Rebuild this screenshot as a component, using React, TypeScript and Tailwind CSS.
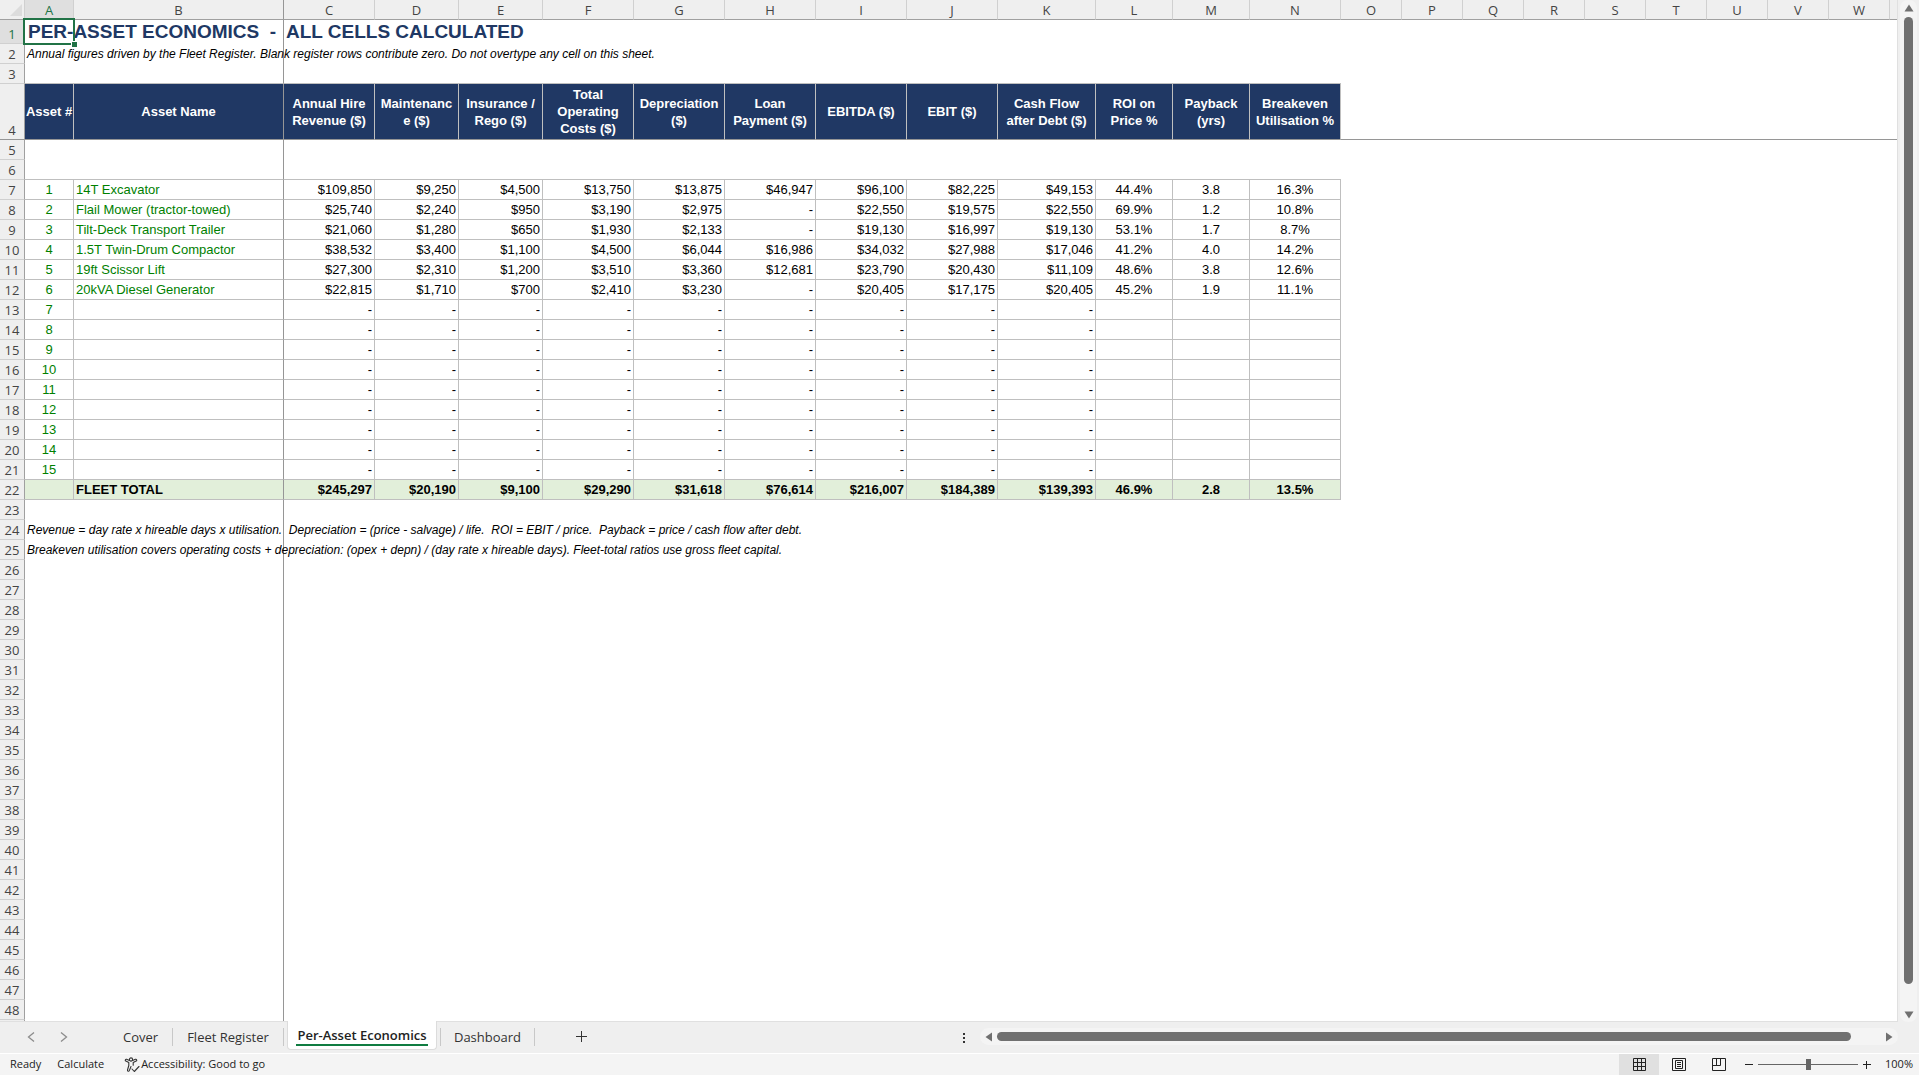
import React from "react";

const cols = [
  { name: "A", w: "w-[49px]" },
  { name: "B", w: "w-[210px]" },
  { name: "C", w: "w-[91px]" },
  { name: "D", w: "w-[84px]" },
  { name: "E", w: "w-[84px]" },
  { name: "F", w: "w-[91px]" },
  { name: "G", w: "w-[91px]" },
  { name: "H", w: "w-[91px]" },
  { name: "I", w: "w-[91px]" },
  { name: "J", w: "w-[91px]" },
  { name: "K", w: "w-[98px]" },
  { name: "L", w: "w-[77px]" },
  { name: "M", w: "w-[77px]" },
  { name: "N", w: "w-[91px]" },
  ..."OPQRSTUVW".split("").map((name) => ({ name, w: "w-[61px]" })),
];

const headings = [
  "Asset #",
  "Asset Name",
  "Annual Hire\nRevenue ($)",
  "Maintenanc\ne ($)",
  "Insurance /\nRego ($)",
  "Total\nOperating\nCosts ($)",
  "Depreciation\n($)",
  "Loan\nPayment ($)",
  "EBITDA ($)",
  "EBIT ($)",
  "Cash Flow\nafter Debt ($)",
  "ROI on\nPrice %",
  "Payback\n(yrs)",
  "Breakeven\nUtilisation %",
];

const assets = [
  ["1", "14T Excavator", "$109,850", "$9,250", "$4,500", "$13,750", "$13,875", "$46,947", "$96,100", "$82,225", "$49,153", "44.4%", "3.8", "16.3%"],
  ["2", "Flail Mower (tractor-towed)", "$25,740", "$2,240", "$950", "$3,190", "$2,975", "-", "$22,550", "$19,575", "$22,550", "69.9%", "1.2", "10.8%"],
  ["3", "Tilt-Deck Transport Trailer", "$21,060", "$1,280", "$650", "$1,930", "$2,133", "-", "$19,130", "$16,997", "$19,130", "53.1%", "1.7", "8.7%"],
  ["4", "1.5T Twin-Drum Compactor", "$38,532", "$3,400", "$1,100", "$4,500", "$6,044", "$16,986", "$34,032", "$27,988", "$17,046", "41.2%", "4.0", "14.2%"],
  ["5", "19ft Scissor Lift", "$27,300", "$2,310", "$1,200", "$3,510", "$3,360", "$12,681", "$23,790", "$20,430", "$11,109", "48.6%", "3.8", "12.6%"],
  ["6", "20kVA Diesel Generator", "$22,815", "$1,710", "$700", "$2,410", "$3,230", "-", "$20,405", "$17,175", "$20,405", "45.2%", "1.9", "11.1%"],
  ...["7", "8", "9", "10", "11", "12", "13", "14", "15"].map((n) => [n, "", "-", "-", "-", "-", "-", "-", "-", "-", "-", "", "", ""]),
];

const totals = ["", "FLEET TOTAL", "$245,297", "$20,190", "$9,100", "$29,290", "$31,618", "$76,614", "$216,007", "$184,389", "$139,393", "46.9%", "2.8", "13.5%"];

const notes: Record<number, string> = {
  2: "Annual figures driven by the Fleet Register. Blank register rows contribute zero. Do not overtype any cell on this sheet.",
  24: "Revenue = day rate x hireable days x utilisation.  Depreciation = (price - salvage) / life.  ROI = EBIT / price.  Payback = price / cash flow after debt.",
  25: "Breakeven utilisation covers operating costs + depreciation: (opex + depn) / (day rate x hireable days). Fleet-total ratios use gross fleet capital.",
};

const align = (c: number) =>
  c === 0 || c > 10 ? "text-center" : c === 1 ? "text-left pl-0.5" : "text-right pr-0.5";

function RowHead({ n }: { n: number }) {
  const active = n === 1;
  return (
    <th
      scope="row"
      className={`border-r border-r-[#a0a0a0] p-0 align-bottom font-normal ${
        active ? "bg-[#dfdfdf] text-[#217346]" : "bg-[#efefef] text-[#444]"
      } ${n === 4 ? "border-b border-b-[#969696]" : "border-b border-b-[#d0d0d0]"}`}
    >
      <span className="block text-center font-['Open_Sans',sans-serif] text-[13px] leading-[18px]">{n}</span>
    </th>
  );
}

/* Empty cells of a row; column B carries the frozen-pane line on its right edge. */
function Blanks({ from, line }: { from: number; line?: string }) {
  return (
    <>
      {cols.slice(from).map((c, i) => (
        <td key={c.name} className={`p-0 ${from + i === 1 ? "border-r border-r-[#969696]" : ""} ${line ?? ""}`} />
      ))}
      <td className={`p-0 ${line ?? ""}`} />
    </>
  );
}

function SheetRow({ n }: { n: number }) {
  if (n === 1)
    return (
      <tr className="h-6">
        <RowHead n={1} />
        <td className="relative p-0">
          <span className="block pl-[3px] text-[19px] leading-6 font-bold whitespace-pre text-[#203864]">
            {"PER-ASSET ECONOMICS  -  ALL CELLS CALCULATED"}
          </span>
          <span className="absolute -inset-x-px -top-0.5 -bottom-px -ml-px border-2 border-[#217346]" />
          <span className="absolute -right-[3px] -bottom-[3px] size-1.5 border-t border-l border-white bg-[#217346]" />
        </td>
        <Blanks from={1} />
      </tr>
    );
  if (notes[n])
    return (
      <tr className="h-5">
        <RowHead n={n} />
        <td className="p-0">
          <span className="block pl-0.5 text-[12px] leading-5 whitespace-pre text-black italic">{notes[n]}</span>
        </td>
        <Blanks from={1} />
      </tr>
    );
  if (n === 4)
    return (
      <tr className="h-14">
        <RowHead n={4} />
        {headings.map((h, i) => (
          <th
            key={h}
            scope="col"
            className={`border-r border-b border-b-[#969696] bg-[#203864] p-0 text-[13px] leading-[17px] font-bold whitespace-pre text-white ${
              i === 1 ? "border-r-[#969696]" : "border-r-[#bfbfbf]"
            }`}
          >
            {h}
          </th>
        ))}
        <Blanks from={14} line="border-b border-b-[#969696]" />
      </tr>
    );
  if (n >= 7 && n <= 22) {
    const total = n === 22;
    const cells = total ? totals : assets[n - 7];
    return (
      <tr className="h-5">
        <RowHead n={n} />
        {cells.map((v, i) => (
          <td
            key={i}
            className={`border-r border-b border-b-[#bfbfbf] p-0 text-[13px] leading-[19px] whitespace-nowrap ${align(i)} ${
              i === 1 ? "border-r-[#969696]" : "border-r-[#bfbfbf]"
            } ${total ? "bg-[#e2efda] font-bold text-black" : i < 2 ? "text-[#008000]" : "text-black"}`}
          >
            {v}
          </td>
        ))}
        <Blanks from={14} />
      </tr>
    );
  }
  if (n === 3 || n === 6)
    return (
      <tr className="h-5">
        <RowHead n={n} />
        {headings.map((h, i) => (
          <td key={h} className={`border-b border-b-[#bfbfbf] p-0 ${i === 1 ? "border-r border-r-[#969696]" : ""}`} />
        ))}
        <Blanks from={14} />
      </tr>
    );
  return (
    <tr className="h-5">
      <RowHead n={n} />
      <Blanks from={0} />
    </tr>
  );
}

function Sheet() {
  return (
    <div className="min-w-0 flex-1 overflow-hidden border-r border-b border-[#e0e0e0] bg-white">
      <table className="w-full table-fixed border-separate border-spacing-0 font-['Liberation_Sans',Arial,sans-serif]">
        <colgroup>
          <col className="w-[25px]" />
          {cols.map((c) => (
            <col key={c.name} className={c.w} />
          ))}
          <col />
        </colgroup>
        <thead>
          <tr className="h-5 bg-[#efefef]">
            <th className="border-r border-b border-[#a0a0a0] border-r-[#d0d0d0] p-0">
              <svg className="ml-2.5 block size-3" viewBox="0 0 12 12" aria-label="Select all">
                <path d="M12 0v12H0z" fill="#dcdcdc" />
              </svg>
            </th>
            {cols.map((c, i) => (
              <th
                key={c.name}
                scope="col"
                className={`border-r border-b border-b-[#a0a0a0] px-0 pt-0.5 pb-0 font-['Open_Sans',sans-serif] text-[13px] leading-[17px] font-normal ${
                  i === 0 ? "bg-[#dfdfdf] text-[#217346]" : "text-[#444]"
                } ${i === 1 ? "border-r-[#969696]" : "border-r-[#d0d0d0]"}`}
              >
                {c.name}
              </th>
            ))}
            <th className="border-b border-b-[#a0a0a0] p-0" />
          </tr>
        </thead>
        <tbody>
          {Array.from({ length: 48 }, (_, i) => (
            <SheetRow key={i} n={i + 1} />
          ))}
          <tr className="h-5">
            <td className="border-r border-r-[#a0a0a0] bg-[#efefef] p-0" />
            <Blanks from={0} />
          </tr>
        </tbody>
      </table>
    </div>
  );
}

function VerticalScroll() {
  return (
    <div className="flex w-[21px] shrink-0 bg-[#efefef] pl-0.5">
      <div className="flex w-[17px] flex-col items-center rounded-lg bg-[#f4f4f4] pt-1 pb-[3px]">
        <button aria-label="Scroll up">
          <svg className="block h-2 w-2.5" viewBox="0 0 10 8">
            <path d="M5 .5 9.5 7.500H.5z" fill="#707070" />
          </svg>
        </button>
        <div className="mt-[5px] mb-[27px] w-[9px] flex-1 rounded-full bg-[#707070]" />
        <button aria-label="Scroll down">
          <svg className="block h-2 w-2.5" viewBox="0 0 10 8">
            <path d="M.5.500h9L5 7.500z" fill="#707070" />
          </svg>
        </button>
      </div>
    </div>
  );
}

function TabBar() {
  return (
    <div className="flex h-[31px] shrink-0 items-start bg-[#efefef] font-['Open_Sans',sans-serif] text-[13px] text-[#333]">
      <div className="flex h-[30px] w-[109px] items-center gap-[25px] pl-[27px] text-[#8c8c8c]">
        <button aria-label="Previous sheet">
          <svg className="block h-2.5 w-2" viewBox="0 0 8 10" fill="none" stroke="currentColor" strokeWidth="1.3">
            <path d="M7 .5 1.500 5 7 9.500" />
          </svg>
        </button>
        <button aria-label="Next sheet">
          <svg className="block h-2.5 w-2" viewBox="0 0 8 10" fill="none" stroke="currentColor" strokeWidth="1.3">
            <path d="M1 .5 6.500 5 1 9.500" />
          </svg>
        </button>
      </div>
      <div className="mt-1.5 flex">
        <button className="h-[18px] w-16 border-r border-[#c8c8c8] leading-[18px]">Cover</button>
        <button className="h-[18px] w-[111px] border-r border-[#c8c8c8] leading-[18px]">Fleet Register</button>
      </div>
      <button className="-mt-px ml-[3px] flex h-[29px] w-[150px] justify-center rounded-b-[4px] border border-t-0 border-[#dcdcdc] bg-white text-[#222]">
        <span className="mt-1 h-[21px] w-[132px] border-b-2 border-[#107c41] leading-5 font-semibold whitespace-nowrap">Per-Asset Economics</span>
      </button>
      <button className="mt-1.5 ml-[3px] h-[18px] w-[95px] border-r border-l border-[#c8c8c8] leading-[18px]">Dashboard</button>
      <button className="mt-[9px] ml-[41px]" aria-label="New sheet">
        <svg className="block size-[11px]" viewBox="0 0 11 11" stroke="#333" fill="none">
          <path d="M5.500 0v11M0 5.500h11" />
        </svg>
      </button>
      <div className="flex-1" />
      <div className="mt-[11px] mr-[15px] flex w-0.5 flex-col gap-0.5">
        <i className="size-0.5 bg-[#333]" />
        <i className="size-0.5 bg-[#333]" />
        <i className="size-0.5 bg-[#333]" />
      </div>
      <div className="mt-1.5 mr-[21px] flex h-[17px] w-[918px] items-center rounded-full bg-[#f4f4f4] px-[5px]">
        <button aria-label="Scroll left">
          <svg className="block h-2.5 w-2" viewBox="0 0 8 10">
            <path d="M.5 5 7 .5v9z" fill="#707070" />
          </svg>
        </button>
        <div className="mr-[34px] ml-1 h-[9px] flex-1 rounded-full bg-[#707070]" />
        <button aria-label="Scroll right">
          <svg className="block h-2.5 w-2" viewBox="0 0 8 10">
            <path d="M7.500 5 1 .5v9z" fill="#707070" />
          </svg>
        </button>
      </div>
    </div>
  );
}

function StatusBar() {
  return (
    <div className="flex h-[22px] shrink-0 items-center border-t border-white bg-[#f4f4f4] font-['Open_Sans',sans-serif] text-[11px] text-[#222]">
      <span className="ml-2.5">Ready</span>
      <span className="ml-4">Calculate</span>
      <button className="ml-5 flex items-center">
        <svg className="mr-px block size-4" viewBox="0 0 16 16" fill="none" stroke="#333" strokeWidth="1.1" strokeLinecap="round" strokeLinejoin="round">
          <circle cx="7" cy="2.500" r="1.600" />
          <path d="M5.400 3.400 2.600 2.300c-1.200-.4-1.900 1.300-.8 1.800L4.800 5.500v3L3.500 13c-.3 1.200 1.300 1.800 1.800.6L7 9.500M8.600 3.400l2.800-1.100c1.200-.4 1.900 1.300.8 1.800L9.200 5.500v2.700M8 12l2.300 2.500 4.700-5" />
        </svg>
        Accessibility: Good to go
      </button>
      <div className="flex-1" />
      <button className="flex h-full w-10 items-center justify-center bg-[#e0e0e0]" aria-label="Normal view">
        <svg className="block size-[13px]" viewBox="0 0 13 13" fill="none" stroke="#222">
          <path d="M.5.500h12v12H.5zM4.500.500v12M8.500.500v12M.5 4.500h12M.5 8.500h12" />
        </svg>
      </button>
      <button className="flex w-10 justify-center" aria-label="Page layout">
        <svg className="block h-[13px] w-3.5" viewBox="0 0 14 13" fill="none" stroke="#222">
          <path d="M.5.500h13v12H.5zM3.500 2.500h7v8h-7zM5 4.500h4M5 6.500h4M5 8.500h4" />
        </svg>
      </button>
      <button className="flex w-10 justify-center" aria-label="Page break preview">
        <svg className="block h-[13px] w-3.5" viewBox="0 0 14 13" fill="none" stroke="#222">
          <path d="M.5.500h13v12H.5zM.5 7.500h8v-7M4.500.500v7" />
        </svg>
      </button>
      <button className="ml-[6px]" aria-label="Zoom out">
        <svg className="block size-2" viewBox="0 0 8 8" stroke="#222">
          <path d="M0 3.500h8" />
        </svg>
      </button>
      <label className="ml-[5px] flex">
        <input
          type="range"
          aria-label="Zoom"
          defaultValue={50}
          className="h-3 w-[100px] appearance-none bg-[linear-gradient(#666,#666)] bg-size-[100%_1px] bg-center bg-no-repeat [&::-webkit-slider-thumb]:h-[11px] [&::-webkit-slider-thumb]:w-[5px] [&::-webkit-slider-thumb]:appearance-none [&::-webkit-slider-thumb]:bg-[#666]"
        />
      </label>
      <button className="ml-[5px]" aria-label="Zoom in">
        <svg className="block size-2" viewBox="0 0 8 8" stroke="#222">
          <path d="M0 3.500h8M3.500 0v8" />
        </svg>
      </button>
      <span className="mr-1.5 ml-3.5 w-7 text-right">100%</span>
    </div>
  );
}

export default function App() {
  return (
    <div className="flex h-screen flex-col overflow-hidden bg-[#efefef]">
      <div className="flex min-h-0 flex-1">
        <Sheet />
        <VerticalScroll />
      </div>
      <TabBar />
      <StatusBar />
    </div>
  );
}
